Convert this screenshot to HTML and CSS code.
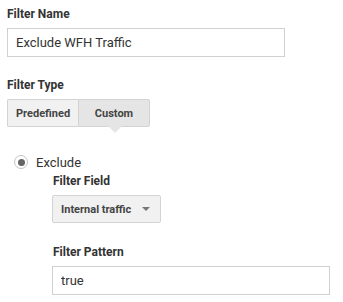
FILE: index.html
```html
<html>
<head>
    <title>Filter</title>
    <link rel="stylesheet" href="styles.css">
</head>
<body>
    <div class="form">
        <div class="label">Filter Name</div>
        <input class="text-input" type="text" value="Exclude WFH Traffic">

        <div class="label type-label">Filter Type</div>
        <div class="toggle">
            <button class="toggle-btn">Predefined</button>
            <button class="toggle-btn selected">Custom</button>
        </div>

        <div class="radio-row">
            <span class="radio"><span class="dot"></span></span>
            <span class="radio-text">Exclude</span>
        </div>

        <div class="sub">
            <div class="label field-label">Filter Field</div>
            <button class="select">
                <span>Internal traffic</span>
                <span class="arrow"></span>
            </button>

            <div class="label pattern-label">Filter Pattern</div>
            <input class="text-input" type="text" value="true">
        </div>
    </div>
</body>
</html>
```

FILE: styles.css
```css
body {
    margin: 0px;
    padding: 0px;
    background: #FFFFFF;
    color: #333333;
    font-family: Roboto, "Liberation Sans", sans-serif;
}

.form {
    padding: 6px 7px 0px 7px;
}

.label {
    font-size: 12px;
    font-weight: bold;
    line-height: 16px;
    color: #333333;
}

.text-input {
    display: block;
    box-sizing: border-box;
    width: 278px;
    height: 29px;
    margin: 6px 0px 0px 0px;
    padding: 0px 8px;
    border: 1px solid #D0D0D0;
    border-radius: 0px;
    font-family: Roboto, "Liberation Sans", sans-serif;
    font-size: 13px;
    color: #333333;
    outline: none;
}

.type-label {
    margin-top: 20px;
}

.toggle {
    display: flex;
    margin-top: 6px;
}

.toggle-btn {
    position: relative;
    box-sizing: border-box;
    height: 28px;
    padding: 0px 8px;
    border: 1px solid #D3D3D3;
    background: #F1F1F1;
    font-family: Roboto, "Liberation Sans", sans-serif;
    font-size: 11px;
    font-weight: bold;
    color: #444444;
    cursor: pointer;
}

.toggle-btn:first-child {
    width: 71px;
    border-radius: 2px 0px 0px 2px;
    border-right: none;
}

.toggle-btn.selected {
    width: 72px;
    background: #E5E5E5;
    border-radius: 0px 2px 2px 0px;
}

/* little pointer under the active tab */
.toggle-btn.selected:after {
    content: "";
    position: absolute;
    left: 29px;
    bottom: -7px;
    border-left: 7px solid transparent;
    border-right: 7px solid transparent;
    border-top: 7px solid #E5E5E5;
}

.radio-row {
    display: flex;
    align-items: center;
    height: 16px;
    margin-top: 27px;
    padding-left: 7px;
}

.radio {
    display: flex;
    align-items: center;
    justify-content: center;
    box-sizing: border-box;
    width: 14px;
    height: 14px;
    border: 1px solid #C4C4C4;
    border-radius: 50%;
}

.dot {
    width: 7px;
    height: 7px;
    border-radius: 50%;
    background: #666666;
}

.radio-text {
    margin-left: 8px;
    font-size: 13px;
    color: #333333;
}

.sub {
    padding-left: 45px;
}

.field-label {
    margin-top: 3px;
    padding-left: 1px;
}

.select {
    display: flex;
    align-items: center;
    justify-content: space-between;
    box-sizing: border-box;
    width: 109px;
    height: 28px;
    margin-top: 6px;
    padding: 0px 10px 0px 8px;
    border: 1px solid #D3D3D3;
    border-radius: 2px;
    background: #F1F1F1;
    font-family: Roboto, "Liberation Sans", sans-serif;
    font-size: 11px;
    font-weight: bold;
    color: #444444;
}

.arrow {
    border-left: 4px solid transparent;
    border-right: 4px solid transparent;
    border-top: 4px solid #777777;
}

.pattern-label {
    margin-top: 21px;
    padding-left: 1px;
}
```
